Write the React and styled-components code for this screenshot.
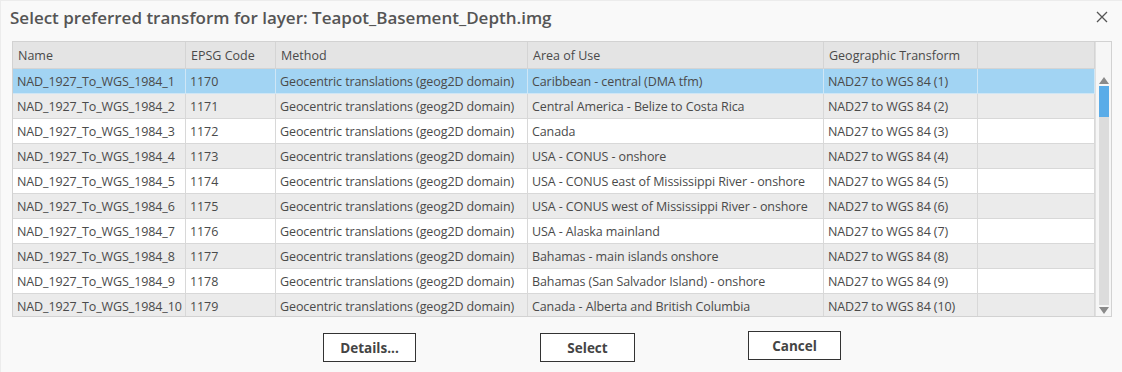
import React from "react";
import styled, { createGlobalStyle } from "styled-components";

const GlobalStyle = createGlobalStyle`
  html, body { margin: 0; padding: 0; background: #f9f9f9; }
  body { font-family: "Open Sans", "Noto Sans", sans-serif; }
`;

const Dialog = styled.div`
  width: 1122px;
  height: 372px;
  box-sizing: border-box;
  background: #f9f9f9;
  border-left: 1px solid #ececec;
  border-top: 1px solid #ececec;
  display: flex;
  flex-direction: column;
`;

const TitleBar = styled.div`
  height: 40px;
  display: flex;
  align-items: flex-start;
  justify-content: space-between;
  padding: 5px 12px 0 9px;
  box-sizing: border-box;
`;

const Title = styled.h1`
  margin: 0;
  font-size: 17px;
  font-weight: 600;
  color: #555;
  letter-spacing: 0;
`;

const CloseButton = styled.button`
  border: none;
  background: transparent;
  padding: 0;
  margin-top: 5px;
  width: 14px;
  height: 14px;
  display: flex;
  cursor: pointer;
`;

const TableFrame = styled.div`
  margin: 0 10px 0 11px;
  height: 274px;
  border: 1px solid #d2d2d2;
  background: #fff;
  display: flex;
  overflow: hidden;
`;

const Grid = styled.div`
  flex: 1;
  display: grid;
  grid-template-columns: 173px 90px 252px 296px 154px 1fr;
  grid-auto-rows: 25px;
  grid-template-rows: 27px;
  align-content: start;
`;

const HeadCell = styled.div`
  background: #e4e4e4;
  color: #4a4a4a;
  font-size: 12.5px;
  padding-left: 5px;
  padding-top: 1px;
  display: flex;
  align-items: center;
  border-right: 1px solid #d4d4d4;
  border-bottom: 1px solid #d4d4d4;
  white-space: nowrap;
  overflow: hidden;
  box-sizing: border-box;
`;

const Cell = styled.div`
  background: ${(p) => (p.$selected ? "#a2d4f3" : p.$alt ? "#ebebeb" : "#ffffff")};
  color: #4a4a4a;
  font-size: 12.5px;
  letter-spacing: -0.1px;
  padding-left: 4px;
  display: flex;
  align-items: center;
  border-right: 1px solid ${(p) => (p.$selected ? "#cfe6f5" : "#d8d8d8")};
  border-bottom: 1px solid ${(p) => (p.$selected ? "#cfe6f5" : "#d8d8d8")};
  white-space: nowrap;
  overflow: hidden;
  box-sizing: border-box;
`;

const ScrollBar = styled.div`
  width: 16px;
  background: #f6f6f6;
  border-left: 1px solid #e0e0e0;
  display: flex;
  flex-direction: column;
  padding-top: 27px;
  box-sizing: border-box;
`;

const Track = styled.div`
  flex: 1;
  display: flex;
  flex-direction: column;
  align-items: center;
  padding: 8px 0 2px;
  box-sizing: border-box;
`;

const Arrow = styled.div`
  width: 0;
  height: 0;
  border-left: 5px solid transparent;
  border-right: 5px solid transparent;
  ${(p) =>
    p.$down
      ? "border-top: 7px solid #8a8a8a;"
      : "border-bottom: 7px solid #8a8a8a;"}
`;

const Rail = styled.div`
  flex: 1;
  width: 10px;
  margin: 2px 0;
  background: #dcdcdc;
  display: flex;
  flex-direction: column;
`;

const Thumb = styled.div`
  height: 31px;
  background: #5aace8;
`;

const Footer = styled.div`
  flex: 1;
  display: flex;
  align-items: flex-start;
  padding: 16px 0 0 322px;
  box-sizing: border-box;
`;

const Button = styled.button`
  width: ${(p) => p.$w}px;
  height: 29px;
  margin-left: ${(p) => p.$ml}px;
  margin-top: ${(p) => p.$mt || 0}px;
  background: #fff;
  border: 1.5px solid #333;
  font-family: "Open Sans", "Noto Sans", sans-serif;
  font-weight: 700;
  font-size: 13.5px;
  color: #444;
  padding: 0;
  cursor: pointer;
`;

const columns = ["Name", "EPSG Code", "Method", "Area of Use", "Geographic Transform", ""];

const areas = [
  "Caribbean - central (DMA tfm)",
  "Central America - Belize to Costa Rica",
  "Canada",
  "USA - CONUS - onshore",
  "USA - CONUS east of Mississippi River - onshore",
  "USA - CONUS west of Mississippi River - onshore",
  "USA - Alaska mainland",
  "Bahamas - main islands onshore",
  "Bahamas (San Salvador Island) - onshore",
  "Canada - Alberta and British Columbia",
];

const rows = areas.map((area, i) => [
  `NAD_1927_To_WGS_1984_${i + 1}`,
  String(1170 + i),
  "Geocentric translations (geog2D domain)",
  area,
  `NAD27 to WGS 84 (${i + 1})`,
  "",
]);

export default function App() {
  return (
    <>
      <GlobalStyle />
      <Dialog>
        <TitleBar>
          <Title>Select preferred transform for layer: Teapot_Basement_Depth.img</Title>
          <CloseButton aria-label="Close">
            <svg width="12" height="12" viewBox="0 0 12 12">
              <path d="M1 1 L11 11 M11 1 L1 11" stroke="#555" strokeWidth="1.3" fill="none" />
            </svg>
          </CloseButton>
        </TitleBar>
        <TableFrame>
          <Grid>
            {columns.map((c, i) => (
              <HeadCell key={i}>{c}</HeadCell>
            ))}
            {rows.map((r, ri) =>
              r.map((v, ci) => (
                <Cell key={`${ri}-${ci}`} $selected={ri === 0} $alt={ri % 2 === 1}>
                  {v}
                </Cell>
              ))
            )}
          </Grid>
          <ScrollBar>
            <Track>
              <Arrow />
              <Rail>
                <Thumb />
              </Rail>
              <Arrow $down />
            </Track>
          </ScrollBar>
        </TableFrame>
        <Footer>
          <Button $w={93} $ml={0}>Details...</Button>
          <Button $w={95} $ml={124}>Select</Button>
          <Button $w={93} $ml={113} $mt={-2}>Cancel</Button>
        </Footer>
      </Dialog>
    </>
  );
}
